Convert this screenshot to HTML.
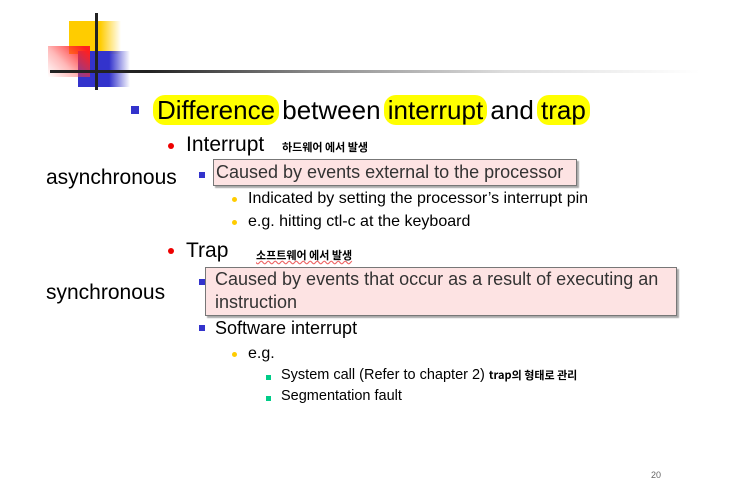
<!DOCTYPE html>
<html><head><meta charset="utf-8"><style>
body{margin:0;width:740px;height:496px;background:#fff;position:relative;overflow:hidden;font-family:"Liberation Sans","Noto Sans CJK KR",sans-serif;color:#000}
div{position:absolute;white-space:nowrap}
.k{font-family:"Noto Sans CJK KR","NanumGothic",sans-serif;font-weight:bold;font-size:11px}
.hl{background:#ffff00;border-radius:12px;padding:0 4px;margin:0 -4px}
.box{border:1px solid #777;background:#fde3e3;box-shadow:2px 2px 1px #aaa}
.sq{width:7px;height:7px;background:#3333cc}
.dot{width:6px;height:6px;border-radius:50%}
</style></head><body>
<div style="left:69px;top:21px;width:52px;height:33px;background:linear-gradient(90deg,#ffcc00 60%,rgba(255,204,0,0))"></div>
<div style="left:78px;top:51px;width:52px;height:36px;background:linear-gradient(90deg,#3333cc 60%,rgba(51,51,204,0))"></div>
<div style="left:48px;top:46px;width:42px;height:31px;background:linear-gradient(225deg,#ff2020 10%,rgba(255,80,80,0.4) 60%,rgba(255,255,255,0))"></div>
<div style="left:95px;top:13px;width:3px;height:77px;background:#222"></div>
<div style="left:50px;top:70px;width:650px;height:3px;background:linear-gradient(90deg,#222 15%,#888 40%,#ddd 70%,rgba(255,255,255,0))"></div>

<div class="sq" style="left:131px;top:106px;width:8px;height:8px"></div>
<div style="left:157px;top:94px;font-size:26px;line-height:32px"><span class="hl">Difference</span> between <span class="hl">interrupt</span> and <span class="hl">trap</span></div>

<div class="dot" style="left:168px;top:143px;background:#e00"></div>
<div style="left:186px;top:133px;font-size:21px">Interrupt</div>
<div class="k" style="left:282px;top:139px">하드웨어 에서 발생</div>
<div style="left:46px;top:166px;font-size:21px">asynchronous</div>
<div class="sq" style="left:199px;top:172px;width:6px;height:6px"></div>
<div class="box" style="left:213px;top:159px;width:362px;height:25px"></div>
<div style="left:216px;top:162px;font-size:18px;color:#333">Caused by events external to the processor</div>
<div class="dot" style="left:232px;top:197px;background:#fc0;width:5px;height:5px"></div>
<div style="left:248px;top:190px;font-size:16px">Indicated by setting the processor’s interrupt pin</div>
<div class="dot" style="left:232px;top:220px;background:#fc0;width:5px;height:5px"></div>
<div style="left:248px;top:213px;font-size:16px">e.g. hitting ctl-c at the keyboard</div>

<div class="dot" style="left:168px;top:248px;background:#e00"></div>
<div style="left:186px;top:239px;font-size:21px">Trap</div>
<div class="k" style="left:256px;top:247px;text-decoration:underline wavy #e66">소프트웨어 에서 발생</div>
<div style="left:46px;top:281px;font-size:21px">synchronous</div>
<div class="sq" style="left:199px;top:279px;width:6px;height:6px"></div>
<div class="box" style="left:205px;top:267px;width:470px;height:47px"></div>
<div style="left:215px;top:268px;font-size:18px;color:#333;line-height:23px">Caused by events that occur as a result of executing an<br>instruction</div>
<div class="sq" style="left:199px;top:325px;width:6px;height:6px"></div>
<div style="left:215px;top:318px;font-size:18px">Software interrupt</div>
<div class="dot" style="left:232px;top:352px;background:#fc0;width:5px;height:5px"></div>
<div style="left:248px;top:345px;font-size:16px">e.g.</div>
<div style="left:266px;top:375px;width:5px;height:5px;background:#0c8"></div>
<div style="left:281px;top:367px;font-size:14.5px">System call (Refer to chapter 2) <span class="k">trap의 형태로 관리</span></div>
<div style="left:266px;top:396px;width:5px;height:5px;background:#0c8"></div>
<div style="left:281px;top:388px;font-size:14.5px">Segmentation fault</div>
<div style="left:651px;top:470px;font-size:9px;color:#666">20</div>
</body></html>
